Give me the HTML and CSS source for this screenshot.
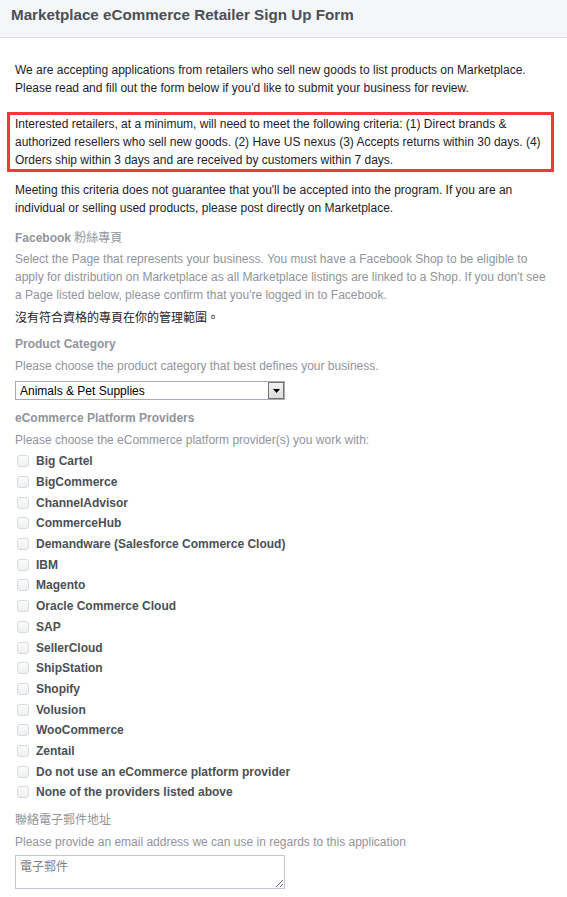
FILE: index.html
```html
<!DOCTYPE html>
<html lang="en">
<head>
<meta charset="utf-8">
<title>Marketplace eCommerce Retailer Sign Up Form</title>
<link rel="stylesheet" href="styles.css">
</head>
<body>
<div class="header"><h1 class="title">Marketplace eCommerce Retailer Sign Up Form</h1></div>
<div class="content">
  <p class="intro">We are accepting applications from retailers who sell new goods to list products on Marketplace. Please read and fill out the form below if you'd like to submit your business for review.</p>
  <p class="criteria">Interested retailers, at a minimum, will need to meet the following criteria: (1) Direct brands &amp; authorized resellers who sell new goods. (2) Have US nexus (3) Accepts returns within 30 days. (4) Orders ship within 3 days and are received by customers within 7 days.</p>
  <p class="meeting">Meeting this criteria does not guarantee that you'll be accepted into the program. If you are an individual or selling used products, please post directly on Marketplace.</p>

  <div class="label label-fb">Facebook <span class="cjk">粉絲專頁</span></div>
  <p class="desc desc-fb">Select the Page that represents your business. You must have a Facebook Shop to be eligible to apply for distribution on Marketplace as all Marketplace listings are linked to a Shop. If you don't see a Page listed below, please confirm that you're logged in to Facebook.</p>
  <p class="nopage cjk">沒有符合資格的專頁在你的管理範圍。</p>

  <div class="label label-pc">Product Category</div>
  <p class="desc">Please choose the product category that best defines your business.</p>
  <div class="select-wrap">
    <select class="select"><option>Animals &amp; Pet Supplies</option></select>
    <span class="select-btn"><svg width="7" height="4" viewBox="0 0 7 4"><path d="M0 0h7L3.5 4z" fill="#000"/></svg></span>
  </div>

  <div class="label label-ec">eCommerce Platform Providers</div>
  <p class="desc">Please choose the eCommerce platform provider(s) you work with:</p>
  <ul class="checks">
    <li><span class="box"></span>Big Cartel</li>
    <li><span class="box"></span>BigCommerce</li>
    <li><span class="box"></span>ChannelAdvisor</li>
    <li><span class="box"></span>CommerceHub</li>
    <li><span class="box"></span>Demandware (Salesforce Commerce Cloud)</li>
    <li><span class="box"></span>IBM</li>
    <li><span class="box"></span>Magento</li>
    <li><span class="box"></span>Oracle Commerce Cloud</li>
    <li><span class="box"></span>SAP</li>
    <li><span class="box"></span>SellerCloud</li>
    <li><span class="box"></span>ShipStation</li>
    <li><span class="box"></span>Shopify</li>
    <li><span class="box"></span>Volusion</li>
    <li><span class="box"></span>WooCommerce</li>
    <li><span class="box"></span>Zentail</li>
    <li><span class="box"></span>Do not use an eCommerce platform provider</li>
    <li><span class="box"></span>None of the providers listed above</li>
  </ul>

  <div class="label label-mail cjk">聯絡電子郵件地址</div>
  <p class="desc">Please provide an email address we can use in regards to this application</p>
  <textarea class="email cjk" placeholder="電子郵件"></textarea>
</div>
</body>
</html>
```
FILE: styles.css
```css
html, body {
  margin: 0;
  padding: 0;
  background: #fff;
}
body {
  font-family: "Liberation Sans", Arial, "Noto Sans CJK TC", sans-serif;
  font-size: 12px;
  line-height: 18px;
  color: #1d2129;
}
.cjk {
  font-family: "Liberation Sans", "Noto Sans CJK TC", sans-serif;
}
.header {
  height: 37px;
  background: #f5f6f7;
  border-bottom: 1px solid #dddfe2;
  display: flex;
  align-items: center;
  padding-left: 11px;
}
.title {
  margin: 0;
  font-size: 15.2px;
  font-weight: bold;
  color: #4b4f56;
  line-height: 18px;
  padding-bottom: 7px;
}
.content {
  padding: 23px 15px 0 15px;
}
p { margin: 0; }
.intro { margin-bottom: 15px; }
.criteria {
  border: 3px solid #ef3a3a;
  margin: 0 -2px 0 -8px;
  padding: 0 5px;
}
.meeting { margin-top: 9px; }
.label {
  font-weight: bold;
  color: #90949c;
  margin-top: 12px;
}
.label .cjk { font-weight: normal; }
.desc {
  color: #90949c;
  margin-top: 3px;
}
.nopage {
  margin-top: 5px;
  color: #1d2129;
}
.label-pc { margin-top: 8px; }
.label-pc + .desc, .label-ec + .desc, .label-mail + .desc { margin-top: 4px; }
.select-wrap {
  position: relative;
  width: 270px;
  height: 19px;
  margin-top: 6px;
}
.select {
  appearance: none;
  -webkit-appearance: none;
  width: 270px;
  height: 19px;
  margin: 0;
  border: 1px solid #a5acb5;
  border-radius: 0;
  background: #fff;
  padding: 0 0 0 4px;
  font-family: "Liberation Sans", Arial, sans-serif;
  font-size: 12px;
  color: #000;
  outline: none;
}
.select-btn {
  position: absolute;
  right: 1px;
  top: 1px;
  width: 14px;
  height: 15px;
  border: 1px solid #707070;
  background: linear-gradient(#f2f2f2, #dcdcdc);
  display: flex;
  align-items: center;
  justify-content: center;
  pointer-events: none;
}
.label-ec { margin-top: 9px; }
.checks {
  list-style: none;
  margin: 2px 0 0 0;
  padding: 0;
}
.checks li {
  height: 20.7px;
  display: flex;
  align-items: center;
  font-weight: bold;
  color: #4b4f56;
}
.box {
  width: 10px;
  height: 10px;
  border: 1px solid #d7dade;
  border-radius: 3px;
  background: linear-gradient(#fafbfb, #eff0f1);
  margin: 0 7px 0 2px;
}
.label-mail {
  font-weight: normal;
  margin-top: 8px;
}
.email {
  display: block;
  margin: 4px 0 0 0;
  width: 270px;
  height: 34px;
  box-sizing: border-box;
  border: 1px solid #bdc7d8;
  padding: 3px 4px;
  font-size: 12px;
  line-height: 16px;
  color: #1d2129;
  resize: both;
  outline: none;
}
.email::placeholder { color: #7f7f7f; }
```
